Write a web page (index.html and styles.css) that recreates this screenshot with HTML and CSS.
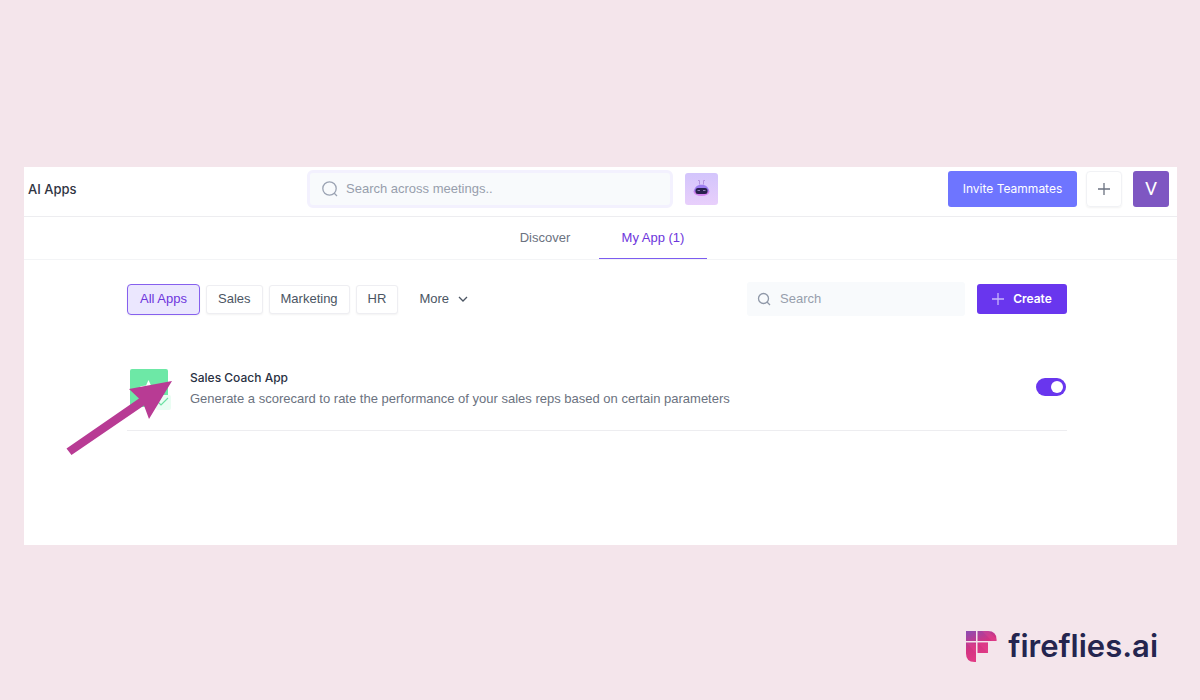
FILE: index.html
```html
<!DOCTYPE html>
<html lang="en">
<head>
<meta charset="utf-8">
<title>AI Apps</title>
<link rel="stylesheet" href="styles.css">
</head>
<body>
<main class="window">
  <header class="topbar">
    <h1 class="title">AI Apps</h1>
    <div class="finder">
      <label class="global-search">
        <svg width="18" height="18" viewBox="0 0 18 18" fill="none" stroke="currentColor" stroke-width="1.3"><circle cx="8.500" cy="8.500" r="6.700"/><path d="M13 13l3 3"/></svg>
        <input type="text" aria-label="Search across meetings" placeholder="Search across meetings..">
      </label>
      <button class="bot" type="button" aria-label="Assistant">
        <svg width="33" height="32" viewBox="0 0 33 32">
          <path d="M13 7.500h1.500v4M20 7.500h-1.500v4" fill="none" stroke="#b494e0" stroke-width="1"/>
          <ellipse cx="16.500" cy="18.500" rx="8" ry="4.500" fill="#d283ef"/>
          <path d="M9 18.500C9.500 14 12 11.700 16.500 11.700s7 2.300 7.500 6.800z" fill="#9c7df0"/>
          <rect x="10.500" y="15" width="12" height="6" rx="2.500" fill="#29204f"/>
          <path d="M12.500 17.500h2.500M18 17.500h2.500" stroke="#8d7cb5" stroke-width="1"/>
        </svg>
      </button>
    </div>
    <div class="account">
      <button class="invite" type="button">Invite Teammates</button>
      <button class="add" type="button" aria-label="Add"><svg width="14" height="14" viewBox="0 0 14 14" fill="none" stroke="currentColor" stroke-width="1.300"><path d="M7 1v12M1 7h12"/></svg></button>
      <button class="avatar" type="button">V</button>
    </div>
  </header>

  <nav class="tabs">
    <a class="tab" href="#discover">Discover</a>
    <a class="tab tab-active" href="#my-app">My App (1)</a>
  </nav>

  <section class="content">
    <div class="toolbar">
      <div class="filters">
        <button class="chip chip-active" type="button">All Apps</button>
        <button class="chip" type="button">Sales</button>
        <button class="chip" type="button">Marketing</button>
        <button class="chip" type="button">HR</button>
        <button class="more" type="button">More <svg width="10" height="6" viewBox="0 0 10 6" fill="none" stroke="currentColor" stroke-width="1.300"><path d="M1 1l4 4 4-4"/></svg></button>
      </div>
      <label class="app-search">
        <svg width="14" height="14" viewBox="0 0 14 14" fill="none" stroke="currentColor" stroke-width="1.300"><circle cx="6.500" cy="6.500" r="5"/><path d="M10 10l3 3"/></svg>
        <input type="text" aria-label="Search apps" placeholder="Search">
      </label>
      <button class="create" type="button"><svg width="12" height="12" viewBox="0 0 12 12" fill="none" stroke="#c9b6fb" stroke-width="1.300"><path d="M6 0v12M0 6h12"/></svg>Create</button>
    </div>

    <article class="app">
      <div class="app-icon">
        <svg width="42" height="42" viewBox="0 0 42 42">
          <rect x="0" y="0" width="38" height="38" rx="2" fill="#6de8a6"/>
          <path d="M18.500 11l2.500 5.500 6 .8-4.500 4 1.200 6-5.200-3-5.200 3 1.200-6-4.500-4 6-.8z" fill="#fff"/>
          <rect x="26" y="26" width="15" height="15" rx="2" fill="#eafdf3"/>
          <path d="M28 33l3 3 7-7" fill="none" stroke="#6de0a3" stroke-width="1.200"/>
        </svg>
        <svg class="pointer" width="108" height="78" viewBox="0 0 108 78">
          <path d="M107 4L64 12l10 9.500L1.500 71.500l5 6.500L79 28.500l5 13.500z" fill="#b83b94"/>
        </svg>
      </div>
      <div class="app-text">
        <h2 class="app-name">Sales Coach App</h2>
        <p class="app-description">Generate a scorecard to rate the performance of your sales reps based on certain parameters</p>
      </div>
      <input class="toggle" type="checkbox" role="switch" aria-label="Enable Sales Coach App" checked>
    </article>
  </section>
</main>

<footer class="brand">
  <svg width="31" height="31" viewBox="0 0 31 31">
    <defs><linearGradient id="flame" gradientUnits="userSpaceOnUse" x1="3" y1="0" x2="17" y2="29"><stop stop-color="#8f4bb0"/><stop offset=".5" stop-color="#d23383"/><stop offset="1" stop-color="#e43c85"/></linearGradient></defs>
    <path d="M0 0h10v10H0zM11.500 0H22q8.500 0 8.500 8.500V10h-19zM0 11.500h10V31H8.500Q0 31 0 22.500zM11.500 11.500H22V22H11.500z" fill="url(#flame)"/>
    <path d="M0 11.500L10 22v-9zM11.500 11.500L22 22V11.500zM16 0l10 10h4.500V8L22 0z" fill="#f04a91" opacity=".3"/>
  </svg>
  <span class="brand-name">fireflies.ai</span>
</footer>
</body>
</html>
```
FILE: styles.css
```css
* { box-sizing: border-box; }

body {
  margin: 0;
  min-height: 100vh;
  display: flex;
  flex-direction: column;
  padding: 167px 23px 38px 24px;
  background: #f4e5eb;
  color: #4b5563;
  font: 13px/20px "Liberation Sans", Arial, sans-serif;
}

button, input { font: inherit; color: inherit; }
button { margin: 0; padding: 0; border: 0; background: none; cursor: pointer; }
h1, h2, p { margin: 0; }
svg { display: block; flex: none; }

.window {
  min-height: 378px;
  background: #fff;
}

.topbar {
  display: grid;
  grid-template-columns: 279fr 411fr 451fr;
  align-items: center;
  height: 50px;
  padding: 0 8px 6px 4px;
  border-bottom: 1px solid #ededf0;
}

.title { font-family: Inter, sans-serif; font-size: 13px; font-weight: 500; color: #303442; }

.finder { display: flex; align-items: center; gap: 12px; }

.global-search {
  display: flex;
  flex: 1;
  align-items: center;
  gap: 7px;
  height: 38px;
  padding: 0 11px;
  border: 3px solid #f3f1fe;
  border-radius: 6px;
  background: #f8fafc;
  color: #9ba3b3;
}

.global-search input, .app-search input {
  flex: 1;
  min-width: 0;
  padding: 0;
  border: 0;
  outline: 0;
  background: none;
}

input::placeholder { color: #979eac; opacity: 1; }

.bot {
  width: 33px;
  height: 32px;
  border-radius: 3px;
  background: linear-gradient(#d3c5fc, #e8cffb);
}

.account { display: flex; align-items: center; justify-content: flex-end; }

.invite {
  width: 129px;
  height: 36px;
  border-radius: 3px;
  background: #6e75ff;
  color: #fff;
  font-family: Inter, sans-serif;
  font-size: 12px;
}

.add {
  display: grid;
  place-items: center;
  width: 36px;
  height: 36px;
  margin: 0 11px 0 9px;
  border: 1px solid #f1f2f5;
  border-radius: 4px;
  box-shadow: 0 1px 2px #0000000d;
  color: #6b7280;
}

.avatar {
  width: 36px;
  height: 36px;
  border-radius: 3px;
  background: #7e57c2;
  color: #fff;
  font: 19px/36px Roboto, sans-serif;
}

.tabs {
  display: flex;
  justify-content: center;
  height: 43px;
  padding-right: 3px;
  border-bottom: 1px solid #f3f4f6;
}

.tab {
  width: 108px;
  padding-top: 11px;
  color: #6b7280;
  text-align: center;
  text-decoration: none;
}

.tab-active { border-bottom: 1px solid #7c5cf0; color: #6d35dc; }

.content { padding: 22px 110px 0 103px; }

.toolbar { display: flex; align-items: center; }

.filters { display: flex; flex: 1; align-items: center; gap: 6px; }

.chip {
  height: 29px;
  padding: 0 11px;
  border: 1px solid #eeeef2;
  border-radius: 3px;
  background: #fff;
  box-shadow: 0 1px 2px #0000000d;
}

.chip-active {
  height: 31px;
  padding: 0 12px;
  border-color: #8660ee;
  border-radius: 4px;
  background: #ebe7fe;
  color: #6d35dc;
}

.more { display: flex; align-items: center; gap: 9px; margin-left: 15px; }

.app-search {
  display: flex;
  flex: 0 1 218px;
  align-items: center;
  gap: 9px;
  min-width: 0;
  height: 34px;
  margin-right: 12px;
  padding: 0 10px;
  border-radius: 3px;
  background: #f8fafc;
  color: #8f98a8;
}

.create {
  display: flex;
  align-items: center;
  justify-content: center;
  gap: 9px;
  width: 90px;
  height: 30px;
  border-radius: 3px;
  background: #6936ee;
  color: #fff;
  font-family: Inter, sans-serif;
  font-size: 12px;
  font-weight: 600;
}

.app {
  display: flex;
  align-items: flex-start;
  margin-top: 50px;
  padding: 0 1px 19px 3px;
  border-bottom: 1px solid #ededf0;
}

.app-icon { position: relative; margin-top: 3px; }

.pointer { position: absolute; top: 8px; left: -65px; overflow: visible; }

.app-text { flex: 1; margin: 1px 0 0 18px; }

.app-name { font: 500 12px/21px Inter, sans-serif; color: #293042; }

.app-description { line-height: 21px; color: #6b7280; }

.toggle {
  appearance: none;
  display: flex;
  justify-content: flex-end;
  width: 30px;
  height: 18px;
  margin: 12px 0 0;
  padding: 3px;
  border-radius: 9px;
  background: #6936ee;
}

.toggle::before {
  content: "";
  width: 12px;
  height: 12px;
  border-radius: 50%;
  background: #fff;
}

.toggle:not(:checked) { justify-content: flex-start; background: #c3c7d0; }

.brand {
  display: flex;
  align-items: center;
  align-self: flex-end;
  gap: 11px;
  margin-top: auto;
  padding-right: 19px;
}

.brand-name { color: #24254f; font: 600 31px/32px Inter, sans-serif; }
```
